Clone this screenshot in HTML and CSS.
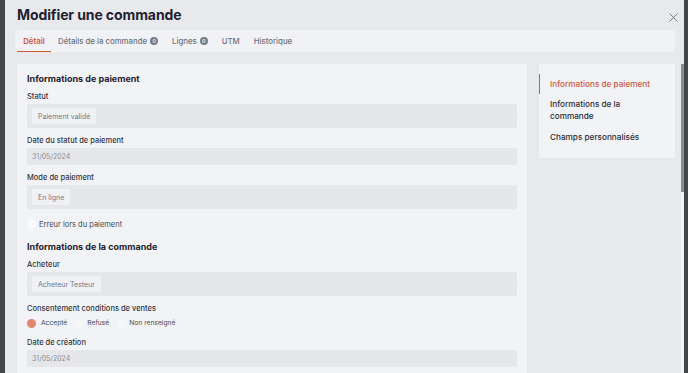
FILE: index.html
```html
<!DOCTYPE html>
<html lang="fr">
<head>
    <meta charset="UTF-8">
    <meta name="viewport" content="width=device-width, initial-scale=1.0">
    <title>Modifier une commande</title>
    <link rel="stylesheet" href="styles.css">
</head>
<body>
    <div class="modal">
        <div class="modal-head">
            <h1 class="modal-title">Modifier une commande</h1>
            <a href="javascript:;" class="modal-close">
                <svg width="9" height="9" viewBox="0 0 9 9"><path d="M0.5 0.5L8.5 8.5M8.5 0.5L0.5 8.5" stroke="#7b7e86" stroke-width="1" fill="none"/></svg>
            </a>
        </div>

        <div class="tabs">
            <a href="javascript:;" class="tab tab-active">Détail</a>
            <a href="javascript:;" class="tab">Détails de la commande <span class="badge">0</span></a>
            <a href="javascript:;" class="tab">Lignes <span class="badge">0</span></a>
            <a href="javascript:;" class="tab">UTM</a>
            <a href="javascript:;" class="tab">Historique</a>
        </div>

        <div class="modal-body">
            <div class="form-panel">
                <h2 class="section-title">Informations de paiement</h2>

                <div class="field">
                    <label class="field-label">Statut</label>
                    <div class="select"><span class="chip">Paiement validé</span></div>
                </div>

                <div class="field">
                    <label class="field-label">Date du statut de paiement</label>
                    <div class="input">31/05/2024</div>
                </div>

                <div class="field">
                    <label class="field-label">Mode de paiement</label>
                    <div class="select"><span class="chip">En ligne</span></div>
                </div>

                <div class="check-row">
                    <span class="checkbox"></span>
                    <span class="check-label">Erreur lors du paiement</span>
                </div>

                <h2 class="section-title">Informations de la commande</h2>

                <div class="field">
                    <label class="field-label">Acheteur</label>
                    <div class="select"><span class="chip">Acheteur Testeur</span></div>
                </div>

                <div class="field">
                    <label class="field-label">Consentement conditions de ventes</label>
                    <div class="radios">
                        <span class="radio radio-on"></span><span class="radio-label">Accepté</span>
                        <span class="radio"></span><span class="radio-label">Refusé</span>
                        <span class="radio"></span><span class="radio-label">Non renseigné</span>
                    </div>
                </div>

                <div class="field">
                    <label class="field-label">Date de création</label>
                    <div class="input">31/05/2024</div>
                </div>
            </div>

            <div class="side-nav">
                <a href="javascript:;" class="side-link side-active">Informations de paiement</a>
                <a href="javascript:;" class="side-link">Informations de la commande</a>
                <a href="javascript:;" class="side-link side-last">Champs personnalisés</a>
            </div>

            <div class="scroll-track"><div class="scroll-thumb"></div></div>
        </div>
    </div>
</body>
</html>
```

FILE: styles.css
```css
*{
    margin: 0;
    padding: 0;
    box-sizing: border-box;
}
body{
    background: #45464a;
    font-family: "Inter", "Noto Sans", sans-serif;
    color: #2a2d36;
    height: 373px;
    overflow: hidden;
}
a{
    text-decoration: none;
    color: inherit;
}

.modal{
    margin-left: 5px;
    width: 679px;
    height: 373px;
    background: #e8e9ed;
    padding-left: 10px;
    overflow: hidden;
}

.modal-head{
    display: flex;
    justify-content: space-between;
    align-items: flex-start;
    height: 30px;
    margin-right: 9px;
}
.modal-title{
    margin: 6px 0 0 2px;
    font-size: 14px;
    line-height: 18px;
    font-weight: 700;
    color: #1f2230;
    letter-spacing: -0.1px;
}
.modal-close{
    margin: 6px -3px 0 0;
    display: block;
}

.tabs{
    display: flex;
    align-items: stretch;
    height: 22px;
    margin-right: 9px;
    background: #f1f2f6;
    border-radius: 3px;
    padding-left: 2px;
}
.tab{
    display: flex;
    align-items: center;
    gap: 3px;
    padding: 0 7px;
    font-size: 7.8px;
    font-weight: 500;
    color: #6d717c;
}
.tab-active{
    color: #d2593a;
    font-weight: 600;
    border-bottom: 1.5px solid #d2593a;
    padding-top: 1px;
    width: 34px;
    justify-content: center;
}
.badge{
    display: inline-flex;
    align-items: center;
    justify-content: center;
    width: 8px;
    height: 8px;
    border-radius: 50%;
    background: #777b84;
    color: #e6e7ea;
    font-size: 5px;
    font-weight: 700;
}

.modal-body{
    display: flex;
    align-items: flex-start;
    margin-top: 12px;
    padding-left: 2px;
}

.form-panel{
    flex: none;
    width: 510px;
    height: 320px;
    background: #f2f3f7;
    padding: 9px 10px 0 10px;
}
.section-title{
    font-size: 9px;
    line-height: 12px;
    font-weight: 700;
    color: #1f2230;
    margin-bottom: 7px;
}
.field{
    margin-bottom: 8px;
}
.field-label{
    display: block;
    font-size: 7.5px;
    line-height: 10px;
    font-weight: 500;
    color: #33363f;
    margin-bottom: 2px;
}
.select{
    height: 24px;
    background: #e6e7eb;
    border-radius: 2px;
    padding: 4px 5px;
    display: flex;
}
.chip{
    display: flex;
    align-items: center;
    padding: 0 6px;
    background: #f0f1f4;
    font-size: 7px;
    color: #747884;
    border-radius: 2px;
}
.input{
    height: 17px;
    background: #e6e7eb;
    border-radius: 2px;
    padding: 0 5px;
    display: flex;
    align-items: center;
    font-size: 7px;
    color: #8a8e98;
}

.check-row{
    display: flex;
    align-items: center;
    gap: 3px;
    height: 10px;
    margin: 10px 0 12px 1px;
}
.checkbox{
    width: 8px;
    height: 8px;
    background: #fafbfc;
    border-radius: 2px;
}
.check-label{
    font-size: 7.5px;
    color: #464a54;
}

.radios{
    display: flex;
    align-items: center;
    height: 10px;
    margin-top: 4px;
    margin-bottom: 10px;
}
.radio{
    width: 8px;
    height: 8px;
    border-radius: 50%;
    background: #f6f7f9;
    margin-right: 4px;
}
.radio-on{
    width: 9px;
    height: 9px;
    background: #e0876c;
    margin-right: 5px;
}
.radio-label{
    font-size: 6.7px;
    color: #464a54;
    margin-right: 8px;
}

.side-nav{
    flex: none;
    width: 136px;
    margin-left: 12px;
    background: #f2f3f7;
    padding: 10px 0 11px 0;
    display: flex;
    flex-direction: column;
}
.side-link{
    font-size: 8.2px;
    font-weight: 500;
    line-height: 12px;
    color: #2a2d36;
    padding: 4px 20px 4px 10px;
    border-left: 1.5px solid transparent;
}
.side-active{
    color: #d2593a;
    border-left-color: #d2593a;
}
.side-last{
    margin-top: 1px;
}

.scroll-track{
    flex: none;
    width: 3px;
    height: 320px;
    margin-left: 6px;
    background: #f5f6f8;
}
.scroll-thumb{
    height: 128px;
    background: #8b8e96;
}
```
